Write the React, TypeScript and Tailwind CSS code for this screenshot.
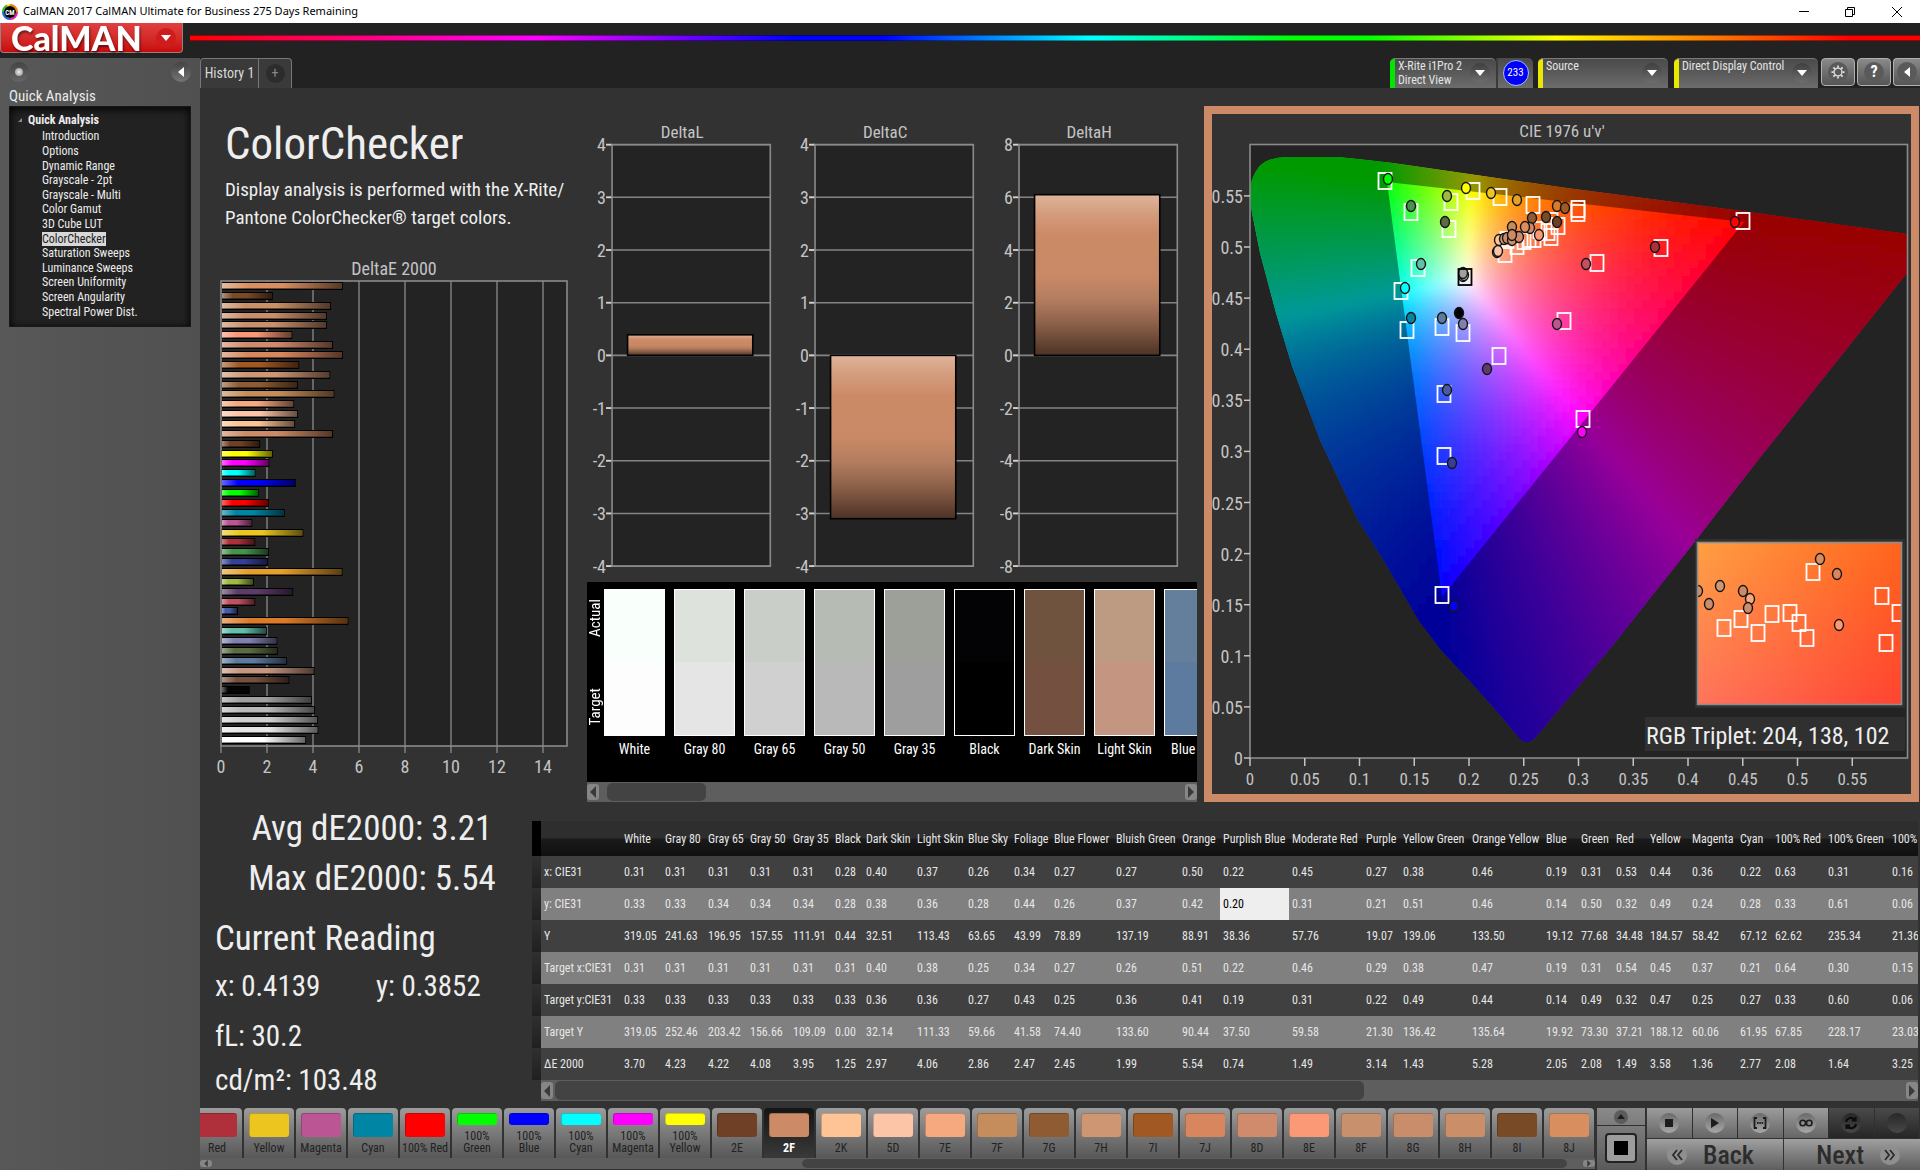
import { useState } from 'react';
import type { ReactNode } from 'react';
import clsx from 'clsx';

interface Patch {
  name: string;
  color: string;
  width: number; // table column width
  values: string[];
}

const ROW_LABELS = ['x: CIE31', 'y: CIE31', 'Y', 'Target x:CIE31', 'Target y:CIE31', 'Target Y', 'ΔE 2000'];

const PATCHES: Patch[] = [
  { name: 'White', color: '#ffffff', width: 41, values: ['0.31', '0.33', '319.05', '0.31', '0.33', '319.05', '3.70'] },
  { name: 'Gray 80', color: '#e6e6e6', width: 43, values: ['0.31', '0.33', '241.63', '0.31', '0.33', '252.46', '4.23'] },
  { name: 'Gray 65', color: '#d0d0d0', width: 42, values: ['0.31', '0.34', '196.95', '0.31', '0.33', '203.42', '4.22'] },
  { name: 'Gray 50', color: '#b9b9b9', width: 43, values: ['0.31', '0.34', '157.55', '0.31', '0.33', '156.66', '4.08'] },
  { name: 'Gray 35', color: '#9f9f9f', width: 42, values: ['0.31', '0.34', '111.91', '0.31', '0.33', '109.09', '3.95'] },
  { name: 'Black', color: '#050505', width: 31, values: ['0.28', '0.28', '0.44', '0.31', '0.33', '0.00', '1.25'] },
  { name: 'Dark Skin', color: '#735040', width: 51, values: ['0.40', '0.38', '32.51', '0.40', '0.36', '32.14', '2.97'] },
  { name: 'Light Skin', color: '#c49580', width: 51, values: ['0.37', '0.36', '113.43', '0.38', '0.36', '111.33', '4.06'] },
  { name: 'Blue Sky', color: '#5d7b9f', width: 46, values: ['0.26', '0.28', '63.65', '0.25', '0.27', '59.66', '2.86'] },
  { name: 'Foliage', color: '#5a6c40', width: 40, values: ['0.34', '0.44', '43.99', '0.34', '0.43', '41.58', '2.47'] },
  { name: 'Blue Flower', color: '#8280b0', width: 62, values: ['0.27', '0.26', '78.89', '0.27', '0.25', '74.40', '2.45'] },
  { name: 'Bluish Green', color: '#62bfaa', width: 66, values: ['0.27', '0.37', '137.19', '0.26', '0.36', '133.60', '1.99'] },
  { name: 'Orange', color: '#db7b2a', width: 41, values: ['0.50', '0.42', '88.91', '0.51', '0.41', '90.44', '5.54'] },
  { name: 'Purplish Blue', color: '#485ba5', width: 69, values: ['0.22', '0.20', '38.36', '0.22', '0.19', '37.50', '0.74'] },
  { name: 'Moderate Red', color: '#c35062', width: 74, values: ['0.45', '0.31', '57.76', '0.46', '0.31', '59.58', '1.49'] },
  { name: 'Purple', color: '#5d3b6a', width: 37, values: ['0.27', '0.21', '19.07', '0.29', '0.22', '21.30', '3.14'] },
  { name: 'Yellow Green', color: '#9fba40', width: 69, values: ['0.38', '0.51', '139.06', '0.38', '0.49', '136.42', '1.43'] },
  { name: 'Orange Yellow', color: '#e5a02c', width: 74, values: ['0.46', '0.46', '133.50', '0.47', '0.44', '135.64', '5.28'] },
  { name: 'Blue', color: '#343f95', width: 35, values: ['0.19', '0.14', '19.12', '0.19', '0.14', '19.92', '2.05'] },
  { name: 'Green', color: '#46944a', width: 35, values: ['0.31', '0.50', '77.68', '0.31', '0.49', '73.30', '2.08'] },
  { name: 'Red', color: '#af303a', width: 34, values: ['0.53', '0.32', '34.48', '0.54', '0.32', '37.21', '1.49'] },
  { name: 'Yellow', color: '#ecc61f', width: 42, values: ['0.44', '0.49', '184.57', '0.45', '0.47', '188.12', '3.58'] },
  { name: 'Magenta', color: '#bb5594', width: 48, values: ['0.36', '0.24', '58.42', '0.37', '0.25', '60.06', '1.36'] },
  { name: 'Cyan', color: '#0086a4', width: 35, values: ['0.22', '0.28', '67.12', '0.21', '0.27', '61.95', '2.77'] },
  { name: '100% Red', color: '#ff0000', width: 53, values: ['0.63', '0.33', '62.62', '0.64', '0.33', '67.85', '2.08'] },
  { name: '100% Green', color: '#00ff00', width: 64, values: ['0.31', '0.61', '235.34', '0.30', '0.60', '228.17', '1.64'] },
  { name: '100% Blue', color: '#0000ff', width: 60, values: ['0.16', '0.06', '21.36', '0.15', '0.06', '23.03', '3.25'] },
];

// Remaining patches only show up in the chart and the swatch strip
const MORE_PATCHES = [
  { name: '100% Cyan', color: '#00ffff', de: 1.5 },
  { name: '100% Magenta', color: '#ff00ff', de: 2.1 },
  { name: '100% Yellow', color: '#ffff00', de: 2.25 },
  { name: '2E', color: '#6f4026', de: 1.7 },
  { name: '2F', color: '#cc8a66', de: 4.87 },
  { name: '2K', color: '#fec496', de: 3.22 },
  { name: '5D', color: '#fdc5a8', de: 3.35 },
  { name: '7E', color: '#f6a87e', de: 3.18 },
  { name: '7F', color: '#c68d5c', de: 4.93 },
  { name: '7G', color: '#8f5b32', de: 3.35 },
  { name: '7H', color: '#cf9674', de: 4.75 },
  { name: '7I', color: '#a15822', de: 3.4 },
  { name: '7J', color: '#d7865e', de: 5.3 },
  { name: '8D', color: '#d08a6c', de: 4.87 },
  { name: '8E', color: '#fb9876', de: 3.1 },
  { name: '8F', color: '#c8906c', de: 4.6 },
  { name: '8G', color: '#c98d6b', de: 4.6 },
  { name: '8H', color: '#ca8e68', de: 4.78 },
  { name: '8I', color: '#784a26', de: 2.25 },
  { name: '8J', color: '#d98e5f', de: 5.3 },
];

const DELTA_E = [
  ...PATCHES.map((p) => ({ name: p.name, color: p.color, de: Number(p.values[6]) })),
  ...MORE_PATCHES,
].reverse();

const STRIP = [...PATCHES.slice(20), ...MORE_PATCHES];

const COMPARE = [
  { name: 'White', actual: '#f9fffb', target: '#fdfdfd' },
  { name: 'Gray 80', actual: '#dde2dc', target: '#e5e5e5' },
  { name: 'Gray 65', actual: '#cacec8', target: '#d0d0d0' },
  { name: 'Gray 50', actual: '#b6bbb4', target: '#b9b9b9' },
  { name: 'Gray 35', actual: '#9ca098', target: '#9e9e9e' },
  { name: 'Black', actual: '#030305', target: '#000000' },
  { name: 'Dark Skin', actual: '#6f533e', target: '#735040' },
  { name: 'Light Skin', actual: '#bd9a82', target: '#c49580' },
  { name: 'Blue Sky', actual: '#637f9b', target: '#5d7a9f' },
];

const WORKFLOW = [
  'Introduction', 'Options', 'Dynamic Range', 'Grayscale - 2pt', 'Grayscale - Multi', 'Color Gamut',
  '3D Cube LUT', 'ColorChecker', 'Saturation Sweeps', 'Luminance Sweeps', 'Screen Uniformity',
  'Screen Angularity', 'Spectral Power Dist.',
];

/* ---------- CIE diagram ---------- */

const LOCUS =
  'M1521 740L1494 708L1469 680L1441 650L1419 621L1384 561L1358 520L1338 478L1320 440L1292 366L1276 313L1260 253L1252 213Q1250 200 1250 190Q1251 180 1255 173Q1260 163 1269 160Q1277 157 1287 157L1338 157L1358 159L1393 163L1476 175L1567 188L1659 200L1742 211L1907 234V273L1758 460L1696 540L1613 645L1535 738Q1528 745 1521 740Z';
const GAMUT = 'M1387 182L1744 222L1442 597Z';

const encode = (c: number) => Math.round(255 * Math.pow(Math.max(c, 0), 0.85));

// Brightest RGB colour for a u'v' chromaticity
function uvToRgb(u: number, v: number) {
  const d = 6 * u - 16 * v + 12;
  const x = (9 * u) / d;
  const y = (4 * v) / d;
  const X = x / y;
  const Z = (1 - x - y) / y;
  const r = 3.2406 * X - 1.5372 - 0.4986 * Z;
  const g = -0.9689 * X + 1.8758 + 0.0415 * Z;
  const b = 0.0557 * X - 0.204 + 1.057 * Z;
  const m = Math.max(r, g, b);
  return `rgb(${encode(r / m)},${encode(g / m)},${encode(b / m)})`;
}

const CELL = 8;
const MESH: { x: number; y: number; fill: string }[] = [];
for (let y = 140; y < 764; y += CELL) {
  // skip what lies far outside the horseshoe
  const left = y < 240 ? 1234 : 1234 + (y - 240) * 0.36;
  const right = y < 270 ? 1920 : 1930 - (y - 270) * 0.78;
  for (let x = 1234; x < 1920; x += CELL) {
    if (x < left || x > right) continue;
    const u = Math.max((x + 4 - 1250) / 1095, 0.001);
    const v = Math.max((758 - y - 4) / 1022, 0.008);
    MESH.push({ x, y, fill: uvToRgb(u, v) });
  }
}

const TARGETS = [
  [1385, 181], [1473, 191], [1500, 197], [1451, 202], [1411, 212], [1449, 229], [1418, 268], [1401, 291],
  [1407, 330], [1442, 327], [1463, 333], [1499, 356], [1444, 394], [1444, 456], [1442, 595], [1743, 221],
  [1661, 248], [1597, 263], [1564, 321], [1583, 419], [1533, 205], [1578, 209], [1578, 213], [1558, 226],
  [1551, 237], [1551, 221], [1505, 254], [1517, 246], [1524, 241], [1529, 239], [1534, 239], [1540, 230],
  [1548, 232], [1507, 240],
];

const READINGS: [number, number, string][] = [
  [1388, 179, '#00ff00'], [1466, 188, '#ffff00'], [1447, 196, '#9fba40'], [1491, 193, '#ecc61f'],
  [1517, 200, '#e5a02c'], [1557, 206, '#db7b2a'], [1565, 208, '#a15822'], [1411, 206, '#46944a'],
  [1445, 222, '#5a6c40'], [1532, 218, '#8f5b32'], [1546, 217, '#784a26'], [1557, 222, '#6f4026'],
  [1512, 227, '#c68d5c'], [1530, 228, '#d7865e'], [1525, 227, '#d98e5f'], [1539, 235, '#fb9876'],
  [1499, 240, '#fec496'], [1504, 239, '#cf9674'], [1507, 238, '#c98d6b'], [1517, 237, '#f6a87e'],
  [1512, 240, '#c8906c'], [1519, 237, '#d08a6c'], [1512, 235, '#cc8a66'], [1497, 252, '#c49580'],
  [1498, 251, '#fdc5a8'], [1463, 276, '#ffffff'], [1464, 275, '#d0d0d0'], [1463, 273, '#a0a0a0'],
  [1459, 313, '#000000'], [1463, 324, '#8280b0'], [1421, 264, '#62bfaa'], [1405, 288, '#00ffff'],
  [1411, 318, '#0086a4'], [1442, 318, '#5d7b9f'], [1487, 369, '#5d3b6a'], [1447, 390, '#485ba5'],
  [1586, 264, '#c35062'], [1655, 247, '#af303a'], [1735, 222, '#ff0000'], [1557, 324, '#bb5594'],
  [1582, 432, '#ff00ff'], [1452, 463, '#343f95'], [1454, 606, '#0000ff'],
];

const INSET_TARGETS = [
  [1813, 572], [1882, 596], [1899, 613], [1886, 643], [1724, 628], [1741, 619], [1758, 633], [1772, 614],
  [1790, 613], [1799, 623], [1807, 638],
];

const INSET_READINGS: [number, number, string][] = [
  [1820, 559, '#d98e5f'], [1837, 574, '#d7865e'], [1720, 586, '#cf9674'], [1698, 591, '#c8906c'],
  [1709, 604, '#c98d6b'], [1743, 591, '#cc8a66'], [1750, 599, '#f6a87e'], [1748, 608, '#d08a6c'],
  [1839, 625, '#fb9876'],
];

const X_TICKS = [0, 0.05, 0.1, 0.15, 0.2, 0.25, 0.3, 0.35, 0.4, 0.45, 0.5, 0.55];

function Target({ x, y, stroke = '#ffffff' }: { x: number; y: number; stroke?: string }) {
  return <rect x={x - 6.5} y={y - 8} width="13" height="16" fill="none" stroke={stroke} strokeWidth="1.8" />;
}

function Reading({ x, y, fill }: { x: number; y: number; fill: string }) {
  return <ellipse cx={x} cy={y} rx="4.5" ry="5.5" fill={fill} stroke="#151515" strokeWidth="1.4" />;
}

function CieDiagram() {
  return (
    <svg viewBox="1212 114 699 680" className="block w-full" fill="#c4c4c4" role="img" aria-label="CIE 1976 u'v'">
      <defs>
        <clipPath id="locus"><path d={LOCUS} /></clipPath>
        <clipPath id="plot"><rect x="1250" y="145" width="657" height="613" /></clipPath>
        <clipPath id="inset"><rect x="1698" y="543" width="203" height="161" /></clipPath>
        <filter id="soften" x="0" y="0" width="1" height="1"><feGaussianBlur stdDeviation="4" /></filter>
        <linearGradient id="insetTop"><stop offset="0" stopColor="#ff9f42" /><stop offset="1" stopColor="#ff651c" /></linearGradient>
        <linearGradient id="insetBottom"><stop offset="0" stopColor="#ff745c" /><stop offset="1" stopColor="#ff4430" /></linearGradient>
        <linearGradient id="fade" x2="0" y2="1"><stop offset="0" stopColor="#000" /><stop offset="1" stopColor="#fff" /></linearGradient>
        <mask id="insetMask"><rect x="1698" y="543" width="203" height="161" fill="url(#fade)" /></mask>
      </defs>

      <text x="1562" y="137" fontSize="17" textAnchor="middle">CIE 1976 u'v'</text>
      <rect x="1250" y="144.500" width="657.500" height="613.500" fill="#232323" />
      <g clipPath="url(#plot)">
        <g clipPath="url(#locus)">
          <g filter="url(#soften)">
            {MESH.map((c) => (
              <rect key={`${c.x}-${c.y}`} x={c.x} y={c.y} width="8.500" height="8.500" fill={c.fill} />
            ))}
          </g>
          <path d={`${LOCUS}${GAMUT}`} fill="#000" fillOpacity="0.4" fillRule="evenodd" />
        </g>
      </g>
      <rect x="1250" y="144.500" width="657.500" height="613.500" fill="none" stroke="#8a8a8a" strokeWidth="1.6" />

      {X_TICKS.map((t) => (
        <g key={t}>
          <path d={`M${1250 + t * 1095} 758v8`} stroke="#c4c4c4" strokeWidth="1.5" />
          <text x={1250 + t * 1095} y="785" fontSize="17" textAnchor="middle">{t}</text>
          <path d={`M1250 ${758 - t * 1022}h-6`} stroke="#c4c4c4" strokeWidth="1.5" />
          <text x="1243" y={765 - t * 1022} fontSize="18" textAnchor="end">{t}</text>
        </g>
      ))}

      {TARGETS.map(([x, y]) => <Target key={`${x}-${y}`} x={x} y={y} />)}
      {READINGS.map(([x, y, fill]) => <Reading key={`${x}-${y}`} x={x} y={y} fill={fill} />)}
      <Target x={1465} y={277} stroke="#000000" />

      <rect x="1695" y="539" width="210" height="169" fill="#303030" />
      <g clipPath="url(#inset)">
        <rect x="1698" y="543" width="203" height="161" fill="url(#insetTop)" />
        <rect x="1698" y="543" width="203" height="161" fill="url(#insetBottom)" mask="url(#insetMask)" />
        {INSET_TARGETS.map(([x, y]) => <Target key={`${x}-${y}`} x={x} y={y} />)}
        {INSET_READINGS.map(([x, y, fill]) => <Reading key={`${x}-${y}`} x={x} y={y} fill={fill} />)}
      </g>
      <rect x="1697.500" y="542.500" width="204" height="162" fill="none" stroke="#8e8e8e" strokeWidth="1.6" />

      <rect x="1645" y="717" width="260" height="34" fill="#303030" />
      <text x="1646" y="744" fontSize="24" fill="#eeeeee">RGB Triplet: 204, 138, 102</text>
    </svg>
  );
}

/* ---------- Bar charts ---------- */

function DeltaEChart() {
  return (
    <svg viewBox="200 256 387 530" className="block w-full" fill="#c4c4c4" role="img" aria-label="DeltaE 2000">
      <defs>
        <linearGradient id="shineX">
          <stop offset="0" stopColor="#fff" stopOpacity="0.4" />
          <stop offset="0.22" stopColor="#fff" stopOpacity="0" />
          <stop offset="0.5" stopColor="#000" stopOpacity="0" />
          <stop offset="1" stopColor="#000" stopOpacity="0.6" />
        </linearGradient>
      </defs>
      <text x="394" y="275" fontSize="18" textAnchor="middle">DeltaE 2000</text>
      <rect x="221" y="281" width="346" height="465" fill="#232323" />
      {[2, 4, 6, 8, 10, 12, 14].map((t) => (
        <path key={t} d={`M${221 + t * 23} 281v472`} stroke="#848484" strokeWidth="1.4" />
      ))}
      <path d="M221 746v7" stroke="#848484" strokeWidth="1.4" />
      {DELTA_E.map((bar, i) => {
        const w = bar.de * 23;
        const y = Math.round(282 + i * 9.86);
        return (
          <g key={bar.name}>
            <rect x="221" y={y} width={w} height="8" fill="#000" />
            <rect x="222" y={y + 1} width={w - 2} height="5.500" fill={bar.color} />
            <rect x="222" y={y + 1} width={w - 2} height="5.500" fill="url(#shineX)" />
          </g>
        );
      })}
      <rect x="221" y="281" width="346" height="465" fill="none" stroke="#8a8a8a" strokeWidth="1.6" />
      {[0, 2, 4, 6, 8, 10, 12, 14].map((t) => (
        <text key={t} x={221 + t * 23} y="773" fontSize="18" textAnchor="middle">{t}</text>
      ))}
    </svg>
  );
}

function DeltaChart({ title, step, value }: { title: string; step: number; value: number }) {
  const unit = 52.6 / step;
  const top = value > 0 ? 236 - value * unit : 236;
  const height = Math.abs(value) * unit;
  return (
    <svg viewBox="0 0 203 462" className="block w-full" fill="#c4c4c4" role="img" aria-label={title}>
      <defs>
        <linearGradient id={`shine${title}`} x2="0" y2="1">
          <stop offset="0" stopColor="#dfb49c" />
          <stop offset="0.12" stopColor="#d39c7c" />
          <stop offset="0.25" stopColor="#cc8a66" />
          <stop offset="0.5" stopColor="#c98966" />
          <stop offset="0.65" stopColor="#b47d60" />
          <stop offset="0.8" stopColor="#8d6149" />
          <stop offset="1" stopColor="#4c3226" />
        </linearGradient>
      </defs>
      <text x="95" y="19" fontSize="17" textAnchor="middle">{title}</text>
      <rect x="25" y="25.500" width="158" height="421" fill="#232323" />
      {[4, 3, 2, 1, 0, -1, -2, -3, -4].map((t) => (
        <g key={t}>
          <path d={`M19 ${236 - t * 52.6}h164`} stroke="#848484" strokeWidth="1.5" />
          <path d={`M19 ${236 - t * 52.6}h6`} stroke="#d0d0d0" strokeWidth="1.8" />
          <text x="19" y={242.5 - t * 52.6} fontSize="18" textAnchor="end">{t * step}</text>
        </g>
      ))}
      <rect x="25" y="25.500" width="158" height="421" fill="none" stroke="#8a8a8a" strokeWidth="1.6" />
      <rect x="40.500" y={top} width="125" height={height} fill={`url(#shine${title})`} stroke="#000" strokeWidth="1.6" />
    </svg>
  );
}

/* ---------- Shared bits ---------- */

interface ScrollbarProps {
  start: number; // percent of the track
  size: number;
  className: string;
}

function Scrollbar({ start, size, className }: ScrollbarProps) {
  return (
    <div className={clsx('flex bg-[#5e5e5e]', className)}>
      <button aria-label="Scroll left" className="my-0.5 flex w-3 items-center justify-center rounded-[3px] bg-[#868686]">
        <svg viewBox="0 0 6 12" className="h-3 max-h-full w-1.5" fill="#3a3a3a"><path d="M6 0v12L0 6z" /></svg>
      </button>
      <div className="mx-0.5 flex-1">
        <div className="h-full rounded-md border-y border-[#5e5e5e] bg-[#434343]" style={{ marginLeft: `${start}%`, width: `${size}%` }} />
      </div>
      <button aria-label="Scroll right" className="my-0.5 flex w-3 items-center justify-center rounded-[3px] bg-[#868686]">
        <svg viewBox="0 0 6 12" className="h-3 max-h-full w-1.5" fill="#3a3a3a"><path d="M0 0v12l6-6z" /></svg>
      </button>
    </div>
  );
}

function Knob({ children, className }: { children?: ReactNode; className?: string }) {
  return (
    <span className={clsx('flex shrink-0 items-center justify-center rounded-full', className)}>{children}</span>
  );
}

function DownArrow() {
  return <svg viewBox="0 0 10 6" className="h-1.5 w-2.5" fill="#fff"><path d="M0 0h10L5 6z" /></svg>;
}

function DeviceBox({ stripe, lines, className }: { stripe: string; lines: string[]; className: string }) {
  return (
    <button className={clsx('flex h-[30px] overflow-hidden rounded-t-[5px] border-t border-[#7a7a7a] bg-linear-to-b from-[#4a4a4a] to-[#6c6c6c] text-left', className)}>
      <span className={clsx('h-full w-[5px] shrink-0', stripe)} />
      <span className="flex-1 pl-[3px] text-[12px] leading-[14px] text-[#e4e4e4]">
        {lines.map((line) => <span key={line} className="block whitespace-nowrap">{line}</span>)}
      </span>
      <Knob className="mr-1.5 mt-1 size-5 bg-linear-to-b from-[#3f3f3f] to-[#6e6e6e]"><DownArrow /></Knob>
    </button>
  );
}

function TransportButton({ label, dark, children }: { label: string; dark?: boolean; children?: ReactNode }) {
  return (
    <button
      aria-label={label}
      className={clsx(
        'flex flex-1 items-center justify-center border-r border-[#303030] bg-linear-to-b',
        dark ? 'from-[#4a4a4a] to-[#262626]' : 'from-[#9c9c9c] to-[#666666]'
      )}
    >
      <Knob className={clsx('size-5 bg-linear-to-b', dark ? 'from-[#282828] to-[#484848]' : 'from-[#6a6a6a] to-[#a8a8a8]')}>
        {children}
      </Knob>
    </button>
  );
}

/* ---------- Page sections ---------- */

function TitleBar() {
  return (
    <div className="flex h-[23px] items-center bg-white text-black">
      <svg viewBox="0 0 16 16" className="ml-0.5 size-4">
        <circle cx="8" cy="8" r="7" fill="none" stroke="#f0e020" strokeWidth="2" />
        <path d="M8 1a7 7 0 0 1 7 7" fill="none" stroke="#f08020" strokeWidth="2" />
        <path d="M15 8a7 7 0 0 1-7 7" fill="none" stroke="#e020c0" strokeWidth="2" />
        <path d="M8 15a7 7 0 0 1-7-7" fill="none" stroke="#2060f0" strokeWidth="2" />
        <path d="M1 8a7 7 0 0 1 4-6.300" fill="none" stroke="#20c040" strokeWidth="2" />
        <circle cx="8" cy="8" r="6" fill="#000" />
        <text x="8" y="10.500" fontSize="7" fontWeight="700" fill="#fff" textAnchor="middle">CM</text>
      </svg>
      <span className="ml-[5px] flex-1 font-['Noto_Sans',sans-serif] text-[11px]">
        CalMAN 2017 CalMAN Ultimate for Business 275 Days Remaining
      </span>
      <button aria-label="Minimize" className="flex w-[46px] justify-center">
        <svg viewBox="0 0 10 10" className="size-2.5" stroke="#000"><path d="M0 4.500h10" /></svg>
      </button>
      <button aria-label="Restore" className="flex w-[46px] justify-center">
        <svg viewBox="0 0 10 10" className="size-2.5" stroke="#000" fill="none"><path d="M.5 2.500h7v7h-7zM2.500 2.500v-2h7v7h-2" /></svg>
      </button>
      <button aria-label="Close" className="flex w-[47px] justify-center">
        <svg viewBox="0 0 10 10" className="size-2.5" stroke="#000"><path d="M0 0l10 10M10 0L0 10" /></svg>
      </button>
    </div>
  );
}

function Header() {
  return (
    <header className="flex h-[35px] items-start">
      <button className="flex h-[30px] w-[183px] items-center rounded-b-[4px] border border-t-0 border-[#9a8080] bg-linear-to-b from-[#e04040] to-[#c80808] pl-2.5 text-white">
        <span className="flex-1 text-left font-['Lato',sans-serif] text-[34px] font-black leading-[26px] drop-shadow-[1px_2px_1px_rgba(0,0,0,0.5)]">
          CalMAN
        </span>
        <Knob className="mr-1.5 size-5 bg-[#d01c1c]"><DownArrow /></Knob>
      </button>
      <div className="ml-[7px] mt-3 h-[6px] flex-1 border-y border-black/40 bg-[linear-gradient(90deg,#f00_0%,#f0f_20%,#00f_35%,#00f_40%,#0ff_52%,#0f0_64%,#0f0_68%,#ff0_79%,#f00_96%)]" />
    </header>
  );
}

function Sidebar({ active, onSelect }: { active: string; onSelect: (item: string) => void }) {
  return (
    <aside className="w-[200px] shrink-0 bg-linear-to-r from-[#585858] to-[#505050]">
      <div className="flex items-center justify-between px-[9px] pt-1">
        <Knob className="size-5 bg-linear-to-b from-[#444] to-[#666]">
          <span className="size-2 rounded-full bg-radial from-[#eee] to-[#888]" />
        </Knob>
        <button aria-label="Collapse panel">
          <Knob className="size-5 bg-linear-to-b from-[#444] to-[#757575]">
            <svg viewBox="0 0 6 10" className="h-2.5 w-1.5" fill="#fff"><path d="M6 0v10L0 5z" /></svg>
          </Knob>
        </button>
      </div>
      <h2 className="mt-1 pl-[9px] text-[15px] leading-5 text-[#ececec]">Quick Analysis</h2>
      <nav className="mx-[9px] h-[221px] border border-[#181818] bg-[#222222] pt-1.5 text-[12px] leading-[14px] text-[#ececec] shadow-[inset_0_2px_8px_#000]">
        <div className="flex items-center font-bold">
          <svg viewBox="0 0 5 5" className="ml-2 mr-1.5 size-1" fill="#888"><path d="M5 0v5H0z" /></svg>
          Quick Analysis
        </div>
        <ul className="mt-0.5 grid h-[190px] auto-rows-fr pl-8">
          {WORKFLOW.map((item) => (
            <li key={item} className="flex items-center">
              <button
                onClick={() => onSelect(item)}
                className={clsx('whitespace-nowrap', item === active && 'bg-[#d8d8d8] text-[#222222]')}
              >
                {item}
              </button>
            </li>
          ))}
        </ul>
      </nav>
    </aside>
  );
}

function Toolbar() {
  const iconButton = 'flex h-7 items-center justify-center rounded-[4px] border border-[#b0b0b0] bg-linear-to-b from-[#8a8a8a] to-[#555555]';
  return (
    <div className="flex h-[30px] items-start">
      <div className="flex h-full overflow-hidden rounded-t-[4px] border-x border-t border-[#777777] bg-[#3a3a3a]">
        <button className="w-[58px] border-r border-[#777777] text-[14px] text-[#d8d8d8]">History 1</button>
        <button aria-label="Add history" className="flex w-8 items-center justify-center">
          <Knob className="size-[19px] bg-[#2c2c2c] text-[14px] text-[#888888]">+</Knob>
        </button>
      </div>
      <div className="flex-1" />
      <DeviceBox stripe="bg-[#00e800]" lines={['X-Rite i1Pro 2', 'Direct View']} className="w-[106px]" />
      <div className="mr-[5px] flex h-[30px] w-[37px] items-center justify-center rounded-tr-[5px] border-l-2 border-[#3a3a3a] bg-linear-to-b from-[#4a4a4a] to-[#6c6c6c]">
        <Knob className="size-[26px] border border-[#a0c0ff] bg-[#0000f8] text-[11px] text-white">233</Knob>
      </div>
      <DeviceBox stripe="bg-[#e8e800]" lines={['Source']} className="mr-1.5 w-[130px]" />
      <DeviceBox stripe="bg-[#e8e800]" lines={['Direct Display Control']} className="mr-[3px] w-36" />
      <button aria-label="Settings" className={clsx(iconButton, 'mr-0.5 w-[34px]')}>
        <Knob className="size-5 bg-[#5a5a5a]">
          <svg viewBox="0 0 16 16" className="size-3.5" stroke="#e0e0e0" fill="none">
            <circle cx="8" cy="8" r="4.500" strokeWidth="1.500" />
            <path strokeWidth="2" d="M8 0.500v2.500M8 13v2.500M0.500 8h2.500M13 8h2.500M2.700 2.700l1.800 1.800M11.500 11.500l1.800 1.800M2.700 13.300l1.800-1.800M11.500 4.500l1.800-1.800" />
          </svg>
        </Knob>
      </button>
      <button aria-label="Help" className={clsx(iconButton, 'mr-0.5 w-[34px]')}>
        <Knob className="size-5 bg-[#5a5a5a] text-[16px] font-bold text-white">?</Knob>
      </button>
      <button aria-label="Hide toolbar" className={clsx(iconButton, 'w-[27px] rounded-r-none border-r-0')}>
        <Knob className="size-5 bg-[#5a5a5a]">
          <svg viewBox="0 0 6 10" className="h-2.5 w-1.5" fill="#fff"><path d="M6 0v10L0 5z" /></svg>
        </Knob>
      </button>
    </div>
  );
}

function ComparePanel() {
  return (
    <div className="bg-black text-white">
      <div className="flex h-[200px] overflow-hidden pt-[7px] text-[14px]">
        <div className="flex h-[147px] w-[17px] shrink-0 flex-col items-center justify-between py-2.5 leading-[17px]">
          <span className="rotate-180 text-[15px] [writing-mode:vertical-rl]">Actual</span>
          <span className="rotate-180 text-[15px] [writing-mode:vertical-rl]">Target</span>
        </div>
        <div className="flex gap-[9px] overflow-hidden">
          {COMPARE.map((c) => (
            <figure key={c.name} className="w-[61px] shrink-0">
              <div className="h-[147px] border border-white">
                <div className="h-1/2" style={{ backgroundColor: c.actual }} />
                <div className="h-1/2" style={{ backgroundColor: c.target }} />
              </div>
              <figcaption className="mt-1 whitespace-nowrap text-center leading-[18px]">{c.name}</figcaption>
            </figure>
          ))}
        </div>
      </div>
      <Scrollbar start={1} size={17} className="h-5" />
    </div>
  );
}

function CurrentReading() {
  return (
    <section className="w-[332px] shrink-0 text-[#eeeeee]">
      <div className="pl-3 pt-0.5 text-center text-[35px] leading-[50px]">
        <p>Avg dE2000: 3.21</p>
        <p>Max dE2000: 5.54</p>
      </div>
      <div className="pl-[15px] pt-2.5">
        <h2 className="text-[35px] leading-[50px]">Current Reading</h2>
        <div className="text-[29px] leading-[44px]">
          <p className="flex">
            <span className="w-[161px]">x: 0.4139</span>
            <span>y: 0.3852</span>
          </p>
          <p className="mt-1.5">fL: 30.2</p>
          <p>cd/m²: 103.48</p>
        </div>
      </div>
    </section>
  );
}

function DataTable() {
  return (
    <section className="min-w-0 flex-1 overflow-hidden pb-1.5 pr-0.5 pt-[19px]">
      <div className="overflow-hidden">
        <table className="w-full min-w-[1386px] table-fixed text-left text-[12px] text-[#e6e6e6]">
          <colgroup>
            <col className="w-[9px]" />
            <col className="w-20" />
            {PATCHES.map((p) => <col key={p.name} style={{ width: p.width }} />)}
          </colgroup>
          <thead>
            <tr className="h-[35px] bg-[linear-gradient(#2e2e2e,#2e2e2e_48%,#1a1a1a_52%,#101010)]">
              <th className="bg-black" />
              <th />
              {PATCHES.map((p) => (
                <th key={p.name} className="overflow-hidden whitespace-nowrap pl-[3px] font-normal">{p.name}</th>
              ))}
            </tr>
          </thead>
          <tbody>
            {ROW_LABELS.map((label, row) => (
              <tr key={label} className={clsx('h-8', row % 2 === 0 ? 'bg-[#404040]' : 'bg-[#808080]')}>
                <td className="bg-linear-to-b from-[#303030] to-[#202020]" />
                <th className="whitespace-nowrap pl-[3px] font-normal">{label}</th>
                {PATCHES.map((p) => (
                  <td
                    key={p.name}
                    className={clsx('overflow-hidden pl-[3px]', p.name === 'Purplish Blue' && row === 1 && 'bg-[#eeeeee] text-black')}
                  >
                    {p.values[row]}
                  </td>
                ))}
              </tr>
            ))}
          </tbody>
        </table>
      </div>
      <Scrollbar start={0} size={60} className="ml-[9px] h-[21px]" />
    </section>
  );
}

function PatchStrip({ active, onSelect }: { active: string; onSelect: (name: string) => void }) {
  return (
    <div className="min-w-0 flex-1">
      <div className="overflow-hidden">
        <div className="-ml-2 flex gap-0.5">
          {STRIP.map((p) => {
            // Labels of the 100% patches wrap on two lines, except red
            const tall = p.name.startsWith('100%') && p.name !== '100% Red';
            return (
              <button
                key={p.name}
                onClick={() => onSelect(p.name)}
                className={clsx(
                  'flex h-[50px] w-[50px] shrink-0 flex-col items-center rounded-t-[4px] bg-linear-to-b pt-[5px] text-[12px] leading-3',
                  p.name === active
                    ? 'from-[#151515] to-[#3a3a3a] font-bold text-white'
                    : 'from-[#9c9c9c] to-[#585858] text-[#222222]'
                )}
              >
                <span
                  className={clsx('w-10 rounded-[3px] border-l border-t border-black/20', tall ? 'h-3' : 'h-6')}
                  style={{ backgroundColor: p.color }}
                />
                <span className={clsx(tall ? 'mt-[5px] w-min' : 'mt-[5px] whitespace-nowrap')}>{p.name}</span>
              </button>
            );
          })}
        </div>
      </div>
      <Scrollbar start={43} size={56} className="h-[11px]" />
    </div>
  );
}

function Transport() {
  return (
    <div className="flex w-[325px] shrink-0 pl-0.5">
      <div className="flex w-12 flex-col bg-linear-to-b from-[#8a8a8a] to-[#5a5a5a]">
        <button aria-label="Expand" className="flex h-[18px] items-center justify-center border-b border-[#303030]">
          <Knob className="size-3.5 bg-[#5c5c5c]">
            <svg viewBox="0 0 8 5" className="h-[5px] w-2" fill="#1c1c1c"><path d="M0 5h8L4 0z" /></svg>
          </Knob>
        </button>
        <button aria-label="Stop all" className="m-auto flex h-[30px] w-8 items-center justify-center rounded-[4px] border-2 border-[#222222] bg-[#9c9c9c]">
          <span className="size-3.5 bg-black" />
        </button>
      </div>
      <div className="flex flex-1 flex-col gap-px pl-0.5">
        <div className="flex h-[30px]">
          <TransportButton label="Stop"><span className="size-2 bg-[#1c1c1c]" /></TransportButton>
          <TransportButton label="Play">
            <svg viewBox="0 0 8 10" className="h-2.5 w-2" fill="#1c1c1c"><path d="M0 0v10l8-5z" /></svg>
          </TransportButton>
          <TransportButton label="Read series">
            <svg viewBox="0 0 14 12" className="h-3 w-3.5" fill="none" stroke="#1c1c1c" strokeWidth="1.800">
              <path d="M4 1H1.500v10H4M10 1h2.500v10H10M4 6h1.500M6.300 6h1.500M8.600 6h1.500" />
            </svg>
          </TransportButton>
          <TransportButton label="Continuous">
            <svg viewBox="0 0 16 8" className="h-2 w-4" fill="none" stroke="#1c1c1c" strokeWidth="1.600">
              <circle cx="4.800" cy="4" r="2.800" /><circle cx="11.200" cy="4" r="2.800" />
            </svg>
          </TransportButton>
          <TransportButton label="Refresh" dark>
            <svg viewBox="0 0 14 14" className="size-3.5" fill="none" stroke="#0c0c0c" strokeWidth="2.200">
              <path d="M2 6a5 5 0 0 1 9-2M12 8a5 5 0 0 1-9 2M11.500 1v3.500H8M2.500 13V9.500H6" />
            </svg>
          </TransportButton>
          <TransportButton label="Record" dark />
        </div>
        <div className="flex h-[31px] gap-px text-[26px] font-medium leading-none text-[#2c2c2c]">
          <button className="flex flex-1 items-center bg-linear-to-b from-[#a0a0a0] to-[#5e5e5e] pl-5">
            <Knob className="mr-4 size-5 bg-[#8f8f8f]">
              <svg viewBox="0 0 12 12" className="size-3" fill="none" stroke="#2c2c2c" strokeWidth="1.800"><path d="M6 1L2 6l4 5M11 1L7 6l4 5" /></svg>
            </Knob>
            Back
          </button>
          <button className="flex flex-1 items-center justify-end bg-linear-to-b from-[#a0a0a0] to-[#5e5e5e] pr-5">
            Next
            <Knob className="ml-4 size-5 bg-[#8f8f8f]">
              <svg viewBox="0 0 12 12" className="size-3" fill="none" stroke="#2c2c2c" strokeWidth="1.800"><path d="M1 1l4 5-4 5M6 1l4 5-4 5" /></svg>
            </Knob>
          </button>
        </div>
      </div>
    </div>
  );
}

export default function App() {
  const [page, setPage] = useState('ColorChecker');
  const [patch, setPatch] = useState('2F');

  return (
    <div className="flex min-h-screen flex-col bg-[#222222] font-['Roboto_Condensed','Lato',sans-serif]">
      <TitleBar />
      <Header />
      <div className="flex flex-1">
        <Sidebar active={page} onSelect={setPage} />
        <div className="flex min-w-0 flex-1 flex-col">
          <Toolbar />
          <main className="flex-1 bg-[#323232]">
            <div className="grid grid-cols-[387fr_610fr_723fr]">
              <section>
                <div className="pl-[25px] pt-7 text-[#eeeeee]">
                  <h1 className="text-[45px] leading-[56px]">ColorChecker</h1>
                  <p className="mb-6 mt-1 text-[19px] leading-7">
                    Display analysis is performed with the X-Rite/<br />
                    Pantone ColorChecker® target colors.
                  </p>
                </div>
                <DeltaEChart />
              </section>
              <section className="min-w-0">
                <div className="grid grid-cols-3 pt-[31px]">
                  <DeltaChart title="DeltaL" step={1} value={0.39} />
                  <DeltaChart title="DeltaC" step={1} value={-3.1} />
                  <DeltaChart title="DeltaH" step={2} value={6.1} />
                </div>
                <ComparePanel />
              </section>
              <section className="pl-[7px] pr-px pt-[18px]">
                <div className="border-8 border-[#cc8a66] bg-[#323232]">
                  <CieDiagram />
                </div>
              </section>
            </div>
            <div className="flex">
              <CurrentReading />
              <DataTable />
            </div>
          </main>
          <footer className="flex bg-[#323232]">
            <PatchStrip active={patch} onSelect={setPatch} />
            <Transport />
          </footer>
        </div>
      </div>
    </div>
  );
}
